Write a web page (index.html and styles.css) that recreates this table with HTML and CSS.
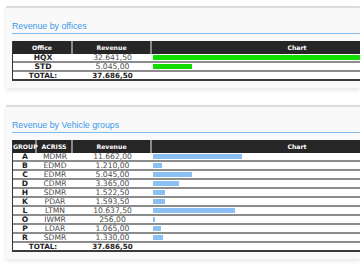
FILE: index.html
```html
<!DOCTYPE html>
<html>
<head>
<meta charset="utf-8">
<link rel="stylesheet" href="styles.css">
</head>
<body>
<div class="panel">
  <h2 class="title">Revenue by offices</h2>
  <div class="tbl offices">
    <div class="row head"><div>Office</div><div>Revenue</div><div>Chart</div></div>
    <div class="row"><div class="key">HQX</div><div>32.641,50</div><div class="chart"><span class="bar green" style="width:86.61%"></span></div></div>
    <div class="row"><div class="key">STD</div><div>5.045,00</div><div class="chart"><span class="bar green" style="width:13.39%"></span></div></div>
    <div class="row total"><div>TOTAL:</div><div>37.686,50</div><div></div></div>
  </div>
</div>

<div class="panel second">
  <h2 class="title">Revenue by Vehicle groups</h2>
  <div class="tbl groups">
    <div class="row head"><div>GROUP</div><div>ACRISS</div><div>Revenue</div><div>Chart</div></div>
    <div class="row"><div class="key">A</div><div>MDMR</div><div>11.662,00</div><div class="chart"><span class="bar blue" style="width:30.95%"></span></div></div>
    <div class="row"><div class="key">B</div><div>EDMD</div><div>1.210,00</div><div class="chart"><span class="bar blue" style="width:3.21%"></span></div></div>
    <div class="row"><div class="key">C</div><div>EDMR</div><div>5.045,00</div><div class="chart"><span class="bar blue" style="width:13.39%"></span></div></div>
    <div class="row"><div class="key">D</div><div>CDMR</div><div>3.365,00</div><div class="chart"><span class="bar blue" style="width:8.93%"></span></div></div>
    <div class="row"><div class="key">H</div><div>SDMR</div><div>1.522,50</div><div class="chart"><span class="bar blue" style="width:4.04%"></span></div></div>
    <div class="row"><div class="key">K</div><div>PDAR</div><div>1.593,50</div><div class="chart"><span class="bar blue" style="width:4.23%"></span></div></div>
    <div class="row"><div class="key">L</div><div>LTMN</div><div>10.637,50</div><div class="chart"><span class="bar blue" style="width:28.23%"></span></div></div>
    <div class="row"><div class="key">O</div><div>IWMR</div><div>256,00</div><div class="chart"><span class="bar blue" style="width:0.68%"></span></div></div>
    <div class="row"><div class="key">P</div><div>LDAR</div><div>1.065,00</div><div class="chart"><span class="bar blue" style="width:2.83%"></span></div></div>
    <div class="row"><div class="key">R</div><div>SDMR</div><div>1.330,00</div><div class="chart"><span class="bar blue" style="width:3.53%"></span></div></div>
    <div class="row total"><div class="span2">TOTAL:</div><div>37.686,50</div><div></div></div>
  </div>
</div>
</body>
</html>
```

FILE: styles.css
```css
html, body {
  margin: 0;
  padding: 0;
  background: #ffffff;
  overflow: hidden;
}

body {
  width: 360px;
  height: 270px;
  font-family: "DejaVu Sans", Verdana, sans-serif;
  padding-top: 6px;
  box-sizing: border-box;
}

.panel {
  margin-left: 6px;
  width: 354px;
  box-sizing: border-box;
  overflow: hidden;
  border-top: 2px solid #dcdcdc;
  background: #f9f9f9;
  padding: 0 0 7px 6px;
  box-shadow: 0 2px 4px rgba(0, 0, 0, 0.1);
}

.panel.second {
  margin-top: 17px;
}

.title {
  margin: 0;
  padding: 13px 0 2px 0;
  line-height: 10px;
  font-family: "Liberation Sans", Arial, sans-serif;
  font-size: 8.8px;
  font-weight: normal;
  color: #3a99e8;
  border-bottom: 1px solid #82bbee;
}

.tbl {
  margin-top: 7px;
  width: 430px;
  border-left: 1px solid #333333;
}

.row {
  display: grid;
}

.offices .row {
  grid-template-columns: 60px 79px 290px;
}

.groups .row {
  grid-template-columns: 24px 36px 79px 290px;
}

.row > div {
  text-align: center;
  white-space: nowrap;
}

.head {
  background: #262626;
  color: #ffffff;
  font-weight: bold;
  font-size: 6.2px;
  height: 13px;
  line-height: 13px;
}

.head > div {
  border-right: 2px solid #8a8a8a;
}

.head > div:last-child {
  border-right: none;
}

.row:not(.head) {
  background: #ffffff;
  height: 7px;
  line-height: 7px;
  font-size: 7.6px;
  color: #4a4a4a;
  border-bottom: 2px solid #8c8c8c;
}

.key {
  font-weight: bold;
  color: #222222;
}

.chart {
  display: flex;
  align-items: center;
  padding-left: 1px;
}

.bar {
  display: block;
  height: 5px;
}

.bar.green {
  background: #10dd00;
}

.bar.blue {
  background: #8cc0f5;
}

.row.total {
  font-weight: bold;
  font-size: 7.2px;
  color: #1e1e1e;
  border-bottom: 2px solid #3a3a3a;
}

.span2 {
  grid-column: span 2;
}
```
